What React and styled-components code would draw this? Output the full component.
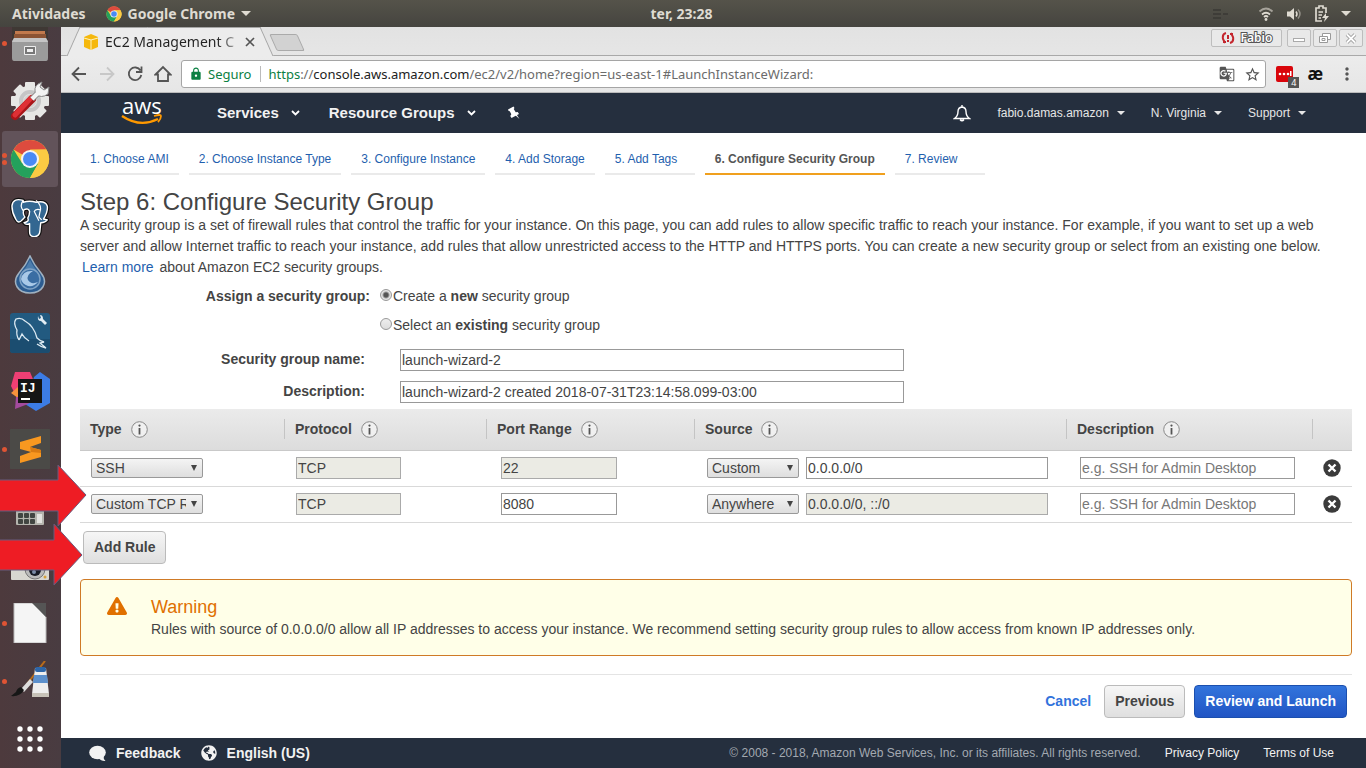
import React from "react";
import styled, { createGlobalStyle, css } from "styled-components";
import { MdLock, MdStarBorder, MdGTranslate, MdMoreVert } from "react-icons/md";
import { FaExclamationTriangle, FaGlobeAmericas } from "react-icons/fa";

const uiFont = `"Noto Sans", "Open Sans", sans-serif`;
const pageFont = `"Liberation Sans", Arial, sans-serif`;

const GlobalStyle = createGlobalStyle`
  *, *::before, *::after { box-sizing: border-box; }
  body { margin: 0; font-family: ${pageFont}; font-size: 14px; color: #444; background: #fff; }
  button, input, select { font: inherit; color: inherit; margin: 0; }
  a { text-decoration: none; color: #1f5fae; }
`;

/* ---------- desktop shell ---------- */

const Desktop = styled.div`
  position: relative;
  display: flex;
  flex-direction: column;
  min-height: 100vh;
`;

const TopBar = styled.header`
  display: grid;
  grid-template-columns: 1fr auto 1fr;
  align-items: center;
  height: 27px;
  padding: 0 15px 0 12px;
  background: linear-gradient(#55534a, #45443f);
  color: #dfdbd2;
  font: 700 14px/26px ${uiFont};
`;

const TopGroup = styled.div`
  display: flex;
  align-items: center;
  justify-content: ${(p) => (p.$end ? "flex-end" : "flex-start")};
  gap: ${(p) => p.$gap}px;
`;

const Caret = styled.span`
  width: 0;
  height: 0;
  border: ${(p) => p.$size || 4}px solid transparent;
  border-top-color: currentColor;
  border-bottom: 0;
`;

const Workspace = styled.div`
  display: flex;
  flex: 1;
`;

const Dock = styled.nav`
  flex: 0 0 61px;
  overflow: hidden;
  background: linear-gradient(90deg, #4d3a3d, #493c41);
`;

const DockList = styled.ul`
  list-style: none;
  margin: -13px 0 0;
  padding: 0;
`;

const DockItem = styled.li`
  display: flex;
  align-items: center;
  height: 58px;
  padding-left: 2px;
`;

const DockButton = styled.button`
  display: flex;
  align-items: center;
  width: 56px;
  height: 56px;
  padding: 0;
  border: 0;
  border-radius: 3px;
  background: ${(p) => (p.$active ? "#62535a" : "transparent")};
`;

const Dots = styled.span`
  display: flex;
  flex-direction: column;
  gap: 2px;
  width: 8px;
`;

const Dot = styled.i`
  width: 5px;
  height: 5px;
  border-radius: 50%;
  background: #df5434;
`;

const Window = styled.div`
  display: flex;
  flex: 1;
  flex-direction: column;
  min-width: 0;
`;

/* ---------- browser chrome ---------- */

const TabStrip = styled.div`
  display: flex;
  height: 29px;
  background: linear-gradient(#e2e2e2, #e6e6e6);
  box-shadow: inset 0 -1px #a9a9a9;
  font-family: ${uiFont};
`;

const slant = css`
  content: "";
  position: absolute;
  top: 0;
  bottom: 0;
  width: 58%;
  background: #ececec;
  border-top: 1px solid #a5a5a5;
`;

const BrowserTab = styled.div`
  position: relative;
  display: flex;
  align-items: center;
  width: 194px;
  margin-left: 12px;
  padding: 0 12px 0 10px;
  font-size: 14px;
  color: #222;
  &::before { ${slant} left: 0; border-left: 1px solid #a5a5a5; transform: skewX(-24deg); }
  &::after { ${slant} right: 0; border-right: 1px solid #a5a5a5; transform: skewX(24deg); }
  > * { position: relative; z-index: 1; }
`;

const TabTitle = styled.span`
  flex: 1;
  margin-left: 6px;
  white-space: nowrap;
  background: linear-gradient(90deg, #222 80%, #bbb 96%);
  background-clip: text;
  color: transparent;
`;

const PlainButton = styled.button`
  display: flex;
  align-items: center;
  gap: ${(p) => p.$gap || 0}px;
  padding: 0;
  border: 0;
  background: none;
`;

const NewTab = styled.button`
  width: 28px;
  height: 17px;
  margin: 7px 0 0 6px;
  border: 1px solid #aaa;
  border-radius: 2px;
  background: #d2d2d2;
  transform: skewX(24deg);
`;

const WindowButtons = styled.div`
  display: flex;
  gap: 2px;
  margin: 2px 3px 0 auto;
`;

const WindowButton = styled.button`
  display: flex;
  align-items: center;
  justify-content: center;
  gap: 6px;
  width: ${(p) => (p.$wide ? 71 : 24)}px;
  height: 18px;
  margin-right: ${(p) => (p.$wide ? 3 : 0)}px;
  padding: 0;
  border: 1px solid #bdbdbd;
  border-radius: 2px;
  background: #e9e9e9;
`;

const UserName = styled.span`
  font-size: 12px;
  font-weight: 600;
  line-height: 16px;
  color: #fff;
  -webkit-text-stroke: 2px #555;
  paint-order: stroke fill;
`;

const Toolbar = styled.div`
  display: flex;
  align-items: center;
  height: 37px;
  padding: 0 9px;
  background: linear-gradient(#ececec, #e6e6e6);
  border-bottom: 1px solid #bbb;
  font-family: ${uiFont};
`;

const NavButtons = styled.div`
  display: flex;
  gap: 10px;
  margin-right: 9px;
`;

const UrlBox = styled.div`
  display: flex;
  flex: 1;
  align-items: center;
  height: 28px;
  padding: 0 4px 0 7px;
  border: 1px solid #a5a5a5;
  border-radius: 3px;
  background: #fff;
  font-size: 13px;
  color: #0b8043;
`;

const Secure = styled.span`
  padding-right: 9px;
  margin: 0 7px 0 5px;
  border-right: 1px solid #bbb;
  line-height: 16px;
`;

const Url = styled.span`
  flex: 1;
  white-space: nowrap;
  color: #6b6b6b;
  em { font-style: normal; color: #0b8043; }
  b { font-weight: 400; color: #222; }
`;

const UrlActions = styled.div`
  display: flex;
  gap: 9px;
  color: #555;
`;

const Extensions = styled.div`
  display: flex;
  align-items: center;
  gap: 14px;
  margin-left: 10px;
  color: #555;
`;

const Blocker = styled.button`
  position: relative;
  width: 17px;
  height: 16px;
  padding: 0;
  border: 0;
  border-radius: 2px;
  background: #d9050b;
`;

const Badge = styled.span`
  position: absolute;
  right: -6px;
  bottom: -6px;
  width: 11px;
  height: 11px;
  background: #555;
  color: #fff;
  font: 9px/11px ${uiFont};
  text-align: center;
`;

const Ash = styled.button`
  padding: 0;
  border: 0;
  background: none;
  color: #111;
  font: 700 17px/20px ${uiFont};
`;

/* ---------- console header and footer ---------- */

const ConsoleBar = styled.header`
  display: flex;
  align-items: center;
  height: 40px;
  padding: 0 60px;
  background: #252f3e;
  color: #fff;
`;

const MainMenu = styled.nav`
  display: flex;
  align-items: center;
  gap: 29px;
  margin-left: 54px;
`;

const MenuButton = styled(PlainButton)`
  gap: 12px;
  padding-bottom: 1px;
  font-size: 15px;
  font-weight: 700;
  color: #f2f2f2;
`;

const AccountMenu = styled.nav`
  display: flex;
  align-items: center;
  gap: 26px;
  margin-left: auto;
  font-size: 12px;
  color: #e6e6e6;
`;

const Footer = styled.footer`
  display: flex;
  align-items: center;
  height: 30px;
  padding: 0 32px 0 28px;
  background: #252f3e;
  color: #f2f2f2;
  font-size: 12px;
`;

const FooterButton = styled(PlainButton)`
  margin-right: 20px;
  font-size: 14px;
  font-weight: 700;
`;

const Legal = styled.div`
  display: flex;
  gap: 24px;
  margin-left: auto;
  color: #a3a9b1;
  a { color: #f2f2f2; }
`;

/* ---------- wizard ---------- */

const Page = styled.main`
  flex: 1;
  padding: 11px 14px 20px 19px;
`;

const Steps = styled.nav`
  display: flex;
  gap: 10px;
`;

const Step = styled.a`
  min-width: 90px;
  height: 31px;
  padding: 0 10px;
  border-bottom: 2px solid ${(p) => (p.$current ? "#f0a01e" : "#eaeaea")};
  color: ${(p) => (p.$current ? "#555" : "#1f5fae")};
  font-size: 12px;
  font-weight: ${(p) => (p.$current ? 700 : 400)};
  line-height: 30px;
  white-space: nowrap;
`;

const Title = styled.h1`
  margin: 14px 0 0;
  font-size: 24px;
  font-weight: 400;
  line-height: 26px;
`;

const Intro = styled.p`
  margin: 0;
  line-height: 21px;
  a { margin: 0 2px; }
`;

const Form = styled.div`
  padding-top: 4px;
`;

const AssignRow = styled.div`
  display: grid;
  grid-template-columns: 290px 1fr;
  column-gap: 10px;
  line-height: 29px;
`;

const RowLabel = styled.label`
  font-weight: 700;
  text-align: right;
`;

const RadioLabel = styled.label`
  display: flex;
  align-items: center;
  white-space: pre;
`;

const Radio = styled.input`
  appearance: none;
  width: 12px;
  height: 12px;
  margin: 0 1px 4px 0;
  border: 1px solid #999;
  border-radius: 50%;
  background: linear-gradient(#eee, #ddd);
  &:checked { background: radial-gradient(circle, #555 0 2px, #e4e4e4 4px); }
`;

const Fields = styled.div`
  display: grid;
  grid-template-columns: 285px 504px;
  gap: 10px 35px;
  margin-top: 9px;
  line-height: 20px;
`;

const TextInput = styled.input`
  width: ${(p) => (p.$width ? `${p.$width}px` : "100%")};
  height: 22px;
  padding: 0 1px;
  border: 1px solid #999;
  border-radius: 0;
  background: #fff;
  color: #444;
  &:disabled { background: #ebebe4; border-color: #aaa; }
  &::placeholder { color: #777; }
`;

const RuleTable = styled.table`
  width: 100%;
  margin-top: 6px;
  border-spacing: 0;
  table-layout: fixed;
  th { height: 42px; padding: 0 0 1px; border-bottom: 1px solid #c9c9c9; text-align: left; background: linear-gradient(#ebebeb, #dcdcdc); }
  td { height: 36px; padding: 0 0 1px; border-bottom: 1px solid #d9d9d9; }
`;

const HeadCell = styled.div`
  display: flex;
  align-items: center;
  gap: 9px;
  height: 20px;
  padding-left: 10px;
  line-height: 18px;
  border-right: ${(p) => (p.$last ? 0 : "1px solid #c4c4c4")};
`;

const Cell = styled.div`
  display: flex;
  align-items: center;
  gap: 7px;
  padding: 0 ${(p) => p.$right || 0}px 0 ${(p) => p.$left}px;
`;

const SelectBox = styled.span`
  position: relative;
  flex: none;
  width: ${(p) => p.$width}px;
  height: 20px;
  &::after {
    content: "";
    position: absolute;
    right: 6px;
    top: 7px;
    border: 3px solid transparent;
    border-top: 6px solid #444;
    border-bottom: 0;
    pointer-events: none;
  }
`;

const Select = styled.select`
  appearance: none;
  width: 100%;
  height: 20px;
  padding: 0 16px 0 4px;
  border: 1px solid #999;
  border-radius: 2px;
  background: linear-gradient(#f4f4f4, #dedede);
  color: #444;
  line-height: 18px;
`;

const Button = styled.button`
  height: 33px;
  padding: 0 10px 1px;
  border: 1px solid ${(p) => (p.$primary ? "#1b4fae" : "#bbb")};
  border-radius: 4px;
  background: ${(p) => (p.$primary ? "linear-gradient(#3274dc, #2155c4)" : "linear-gradient(#f6f6f6, #dfdfdf)")};
  color: ${(p) => (p.$primary ? "#fff" : "#444")};
  font-weight: 700;
`;

const AddRow = styled.div`
  padding: 8px 3px 0;
`;

const Warning = styled.section`
  display: flex;
  gap: 24px;
  margin-top: 15px;
  padding: 16px 26px 15px;
  border: 1px solid #cf7a26;
  border-radius: 4px;
  background: #ffffe8;
`;

const WarningTitle = styled.h2`
  margin: 0;
  color: #e07000;
  font-size: 18px;
  font-weight: 400;
  line-height: 22px;
`;

const WarningText = styled.p`
  margin: 0;
  line-height: 22px;
`;

const Actions = styled.div`
  display: flex;
  align-items: center;
  justify-content: flex-end;
  gap: 9px;
  margin-top: 18px;
  padding: 10px 5px 0;
  border-top: 1px solid #e4e4e4;
`;

const Cancel = styled.a`
  margin-right: 4px;
  padding-bottom: 1px;
  color: #3173dc;
  font-weight: 700;
`;

const Annotations = styled.svg`
  position: absolute;
  left: 0;
  top: 464px;
  pointer-events: none;
`;

/* ---------- drawings ---------- */

const ChromeIcon = ({ size }) => (
  <svg width={size} height={size} viewBox="0 0 40 40">
    <circle cx="20" cy="20" r="19" fill="#fbcb43" />
    <path d="M20 20 3.5 10.5A19 19 0 0 1 36.5 10.5L20 11z" fill="#dd4b3e" />
    <path d="M3.5 10.5A19 19 0 0 0 20 39L28 25 20 20 12 24z" fill="#24a15c" />
    <path d="M20 39A19 19 0 0 0 36.5 10.5H20L28 25z" fill="#fbcb43" />
    <circle cx="20" cy="20" r="9" fill="#f4f4f4" />
    <circle cx="20" cy="20" r="7" fill="#4a8af4" />
  </svg>
);

const icon = (children) => (
  <svg width="40" height="40" viewBox="0 0 40 40">{children}</svg>
);

const gearTeeth = [0, 45, 90, 135, 180, 225, 270, 315];

const dockApps = [
  { name: "Files", dots: 1, art: icon(<>
    <rect x="2" y="1" width="36" height="20" rx="2" fill="#3f3834" />
    <path d="M5 8h30v3H5z" fill="#c27a4d" /><path d="M4 11h32v5H4z" fill="#8c5434" />
    <path d="M4 15h32l2 3v17q0 3-2 3H4q-2 0-2-3V18z" fill="#9b9b9b" />
    <path d="M4 15h32l2 4H2z" fill="#c5c5c5" />
    <rect x="14" y="23" width="12" height="9" rx="1" fill="#eee" /><rect x="15" y="24" width="10" height="7" fill="#777" /><rect x="17" y="26" width="6" height="3" fill="#eee" />
  </>) },
  { name: "Settings", dots: 0, art: icon(<>
    {gearTeeth.map((a) => <rect key={a} x="15" y="1" width="10" height="10" rx="1" fill="#e7e7e5" transform={`rotate(${a} 20 20)`} />)}
    <circle cx="20" cy="20" r="11" fill="#d4d4d2" stroke="#e7e7e5" strokeWidth="9" /><circle cx="20" cy="20" r="9" fill="none" stroke="#c6c6c6" strokeWidth="4" />
    <path d="M5 35 22 18" stroke="#a91519" strokeWidth="8" strokeLinecap="round" /><path d="M5 34 21 17" stroke="#df3035" strokeWidth="5" strokeLinecap="round" />
    <path d="M22 18 29 11" stroke="#888" strokeWidth="6" /><path d="M28 3q-5 4-2 10 5 5 12 0l1-7-5 3-4-3 2-5z" fill="#f3f3f3" stroke="#888" /><path d="M22 18 30 10" stroke="#f3f3f3" strokeWidth="4" />
  </>) },
  { name: "Google Chrome", dots: 2, active: true, art: <ChromeIcon size={40} /> },
  { name: "PostgreSQL", dots: 0, art: icon(<g transform="translate(1 1.500) scale(.93)">
    <path d="M13 2Q2-1 1 8q0 7 4 14 3 6 7 1l3-3q-3-4-1-8 5-2 6 2 0 4-2 7 2 4-4 5 2 3 6 1v9q0 5 5 5t6-5l1-10q5 0 7-3l-4-1q5-8 4-14-2-6-12-4-7-2-14 0z" fill="#336791" stroke="#111" strokeWidth="4" strokeLinejoin="round" />
    <path d="M13 2Q2-1 1 8q0 7 4 14 3 6 7 1l3-3q-3-4-1-8 5-2 6 2 0 4-2 7 2 4-4 5 2 3 6 1v9q0 5 5 5t6-5l1-10q5 0 7-3l-4-1q5-8 4-14-2-6-12-4-7-2-14 0z" fill="#336791" stroke="#fff" strokeWidth="1.500" strokeLinejoin="round" />
    <path d="M13 2q-4 6 0 11M27 2q7 6 4 13l-1 5 3 3M31 12q-5-1-6 2l3 6 2 4" fill="none" stroke="#fff" strokeWidth="1.300" />
  </g>) },
  { name: "Deluge", dots: 0, art: icon(<>
    <path d="M20 1q4 9 11 17c8 10 1 20-11 20S1 28 9 18Q16 10 20 1z" fill="#2c5c90" stroke="#9fb1c0" strokeWidth="1.500" />
    <path d="M20 5q4 8 8 12H12q5-5 8-12z" fill="#4d7dac" />
    <circle cx="20" cy="24" r="10" fill="#3a6da3" stroke="#7fa3c6" strokeWidth="1.500" /><path d="M11 24q2-9 12-8-7 4-5 9 3 5 10 2-4 5-10 4-6-2-7-7z" fill="#a9c9e8" />
  </>) },
  { name: "MySQL Workbench", dots: 0, art: icon(<>
    <rect width="40" height="40" rx="3" fill="#225a80" /><path d="M0 26h40v11q0 3-3 3H3q-3 0-3-3z" fill="#1b4d70" />
    <path d="M9 27q-3-5-2-10Q3 10 6 6q5-2 9 2 9 5 12 17 3 3 7 4l-4 1 6 5q-5-1-9-4M9 27l3-6q2 4 7 7" fill="none" stroke="#dceaf2" strokeWidth="1.300" />
    <path d="M28 3q-1 5 3 5l4 4 2-2-4-4q0-4-3-4l1 3-2 1z" fill="#e2edf4" />
  </>) },
  { name: "IntelliJ IDEA", dots: 0, art: icon(<>
    <path d="M5 1h15l5 12L8 29 1 15z" fill="#ef3f74" /><path d="M1 22 8 16v11z" fill="#f5933c" />
    <path d="M24 6 30 1 40 8V32L26 40 15 33z" fill="#3c7ce5" /><path d="M6 26 27 25 18 33 5 38z" fill="#a34b9d" />
    <rect x="8" y="8" width="24" height="24" fill="#151515" />
    <text x="10" y="21" fill="#fff" fontFamily="Liberation Mono" fontWeight="700" fontSize="13">IJ</text><path d="M11 27h9v2h-9z" fill="#fff" />
  </>) },
  { name: "Sublime Text", dots: 1, art: icon(<>
    <rect y="-1" width="40" height="42" rx="2" fill="#4b4a47" /><path d="M10 13 31 7v7l-11 4 11 3v7l-21 6v-7l11-4-11-3z" fill="#f89820" />
    <path d="M20 18l11 3v3l-10-1z" fill="#d97b12" />
  </>) },
  { name: "Calculator", dots: 0, art: icon(<>
    <rect x="6" y="2" width="28" height="36" rx="1" fill="#b5b5ae" />
    {[8, 14, 20].map((x) => [26, 32].map((y) => <rect key={`${x}${y}`} x={x} y={y} width="5" height="5" rx="1" fill="#414541" />))}
    <rect x="27" y="27" width="5" height="9" fill="#e3e3df" />
  </>) },
  { name: "Screenshot", dots: 0, art: icon(<>
    <rect x="1" y="8" width="38" height="27" rx="1" fill="#d8d7d1" /><circle cx="25" cy="24" r="10" fill="#bbb" stroke="#777" /><circle cx="25" cy="25" r="6" fill="#181b26" /><circle cx="24" cy="27" r="2" fill="#7b8ca8" /><circle cx="35" cy="32" r="1.500" fill="#d5a13c" />
  </>) },
  { name: "LibreOffice", dots: 1, art: icon(<>
    <path d="M4 0h20l12 14v26H4z" fill="#f5f5f5" stroke="#b9b9b9" /><path d="M22 0h14v14z" fill="#555" />
  </>) },
  { name: "Paint", dots: 1, art: icon(<>
    <path d="M35 0 17 23" stroke="#b96c1a" strokeWidth="2" /><path d="M20 18 11 28l3 3 9-10z" fill="#ddd" /><path d="M11 26q-4 1-5 5l-5 4q9 1 13-6z" fill="#171717" />
    <path d="M25 7h11l3 26H22z" fill="#eee" /><rect x="25" y="6" width="11" height="5" rx="2" fill="#2d66a8" /><path d="M24 14h13l1 8H23z" fill="#5c90cc" /><path d="M22 32h17v4H22z" fill="#c7c2b8" />
  </>) },
  { name: "Show applications", dots: 0, art: icon(
    [10, 20, 30].map((x) => [10, 20, 30].map((y) => <circle key={`${x}-${y}`} cx={x} cy={y} r="2.700" fill="#fff" />))
  ) },
];

const Chevron = () => (
  <svg width="9" height="6" viewBox="0 0 9 6"><path d="m1 1 3.500 3.500L8 1" fill="none" stroke="#fff" strokeWidth="1.800" /></svg>
);

const Info = () => (
  <svg width="17" height="17" viewBox="0 0 17 17" role="img" aria-label="info">
    <circle cx="8.500" cy="8.500" r="7.800" fill="#f0f0f0" stroke="#888" />
    <path d="M8.500 7v6.500" stroke="#555" strokeWidth="1.800" /><circle cx="8.500" cy="4.600" r="1.100" fill="#555" />
  </svg>
);

const RemoveIcon = () => (
  <svg width="18" height="18" viewBox="0 0 18 18"><circle cx="9" cy="9" r="8.700" fill="#3b3b3b" /><path d="m5.500 5.500 7 7m0-7-7 7" stroke="#fff" strokeWidth="2.400" /></svg>
);

const NavIcon = ({ d, color = "#555" }) => (
  <svg width="18" height="18" viewBox="0 0 18 18"><path d={d} fill="none" stroke={color} strokeWidth="1.800" /></svg>
);

const PinIcon = () => (
  <svg width="16" height="14" viewBox="0 0 16 14" fill="#fff">
    <path d="M3 3.500 8.500.5l1 1.500-.8 1 2 3.200 2-.2 1.300 2L6.500 12 5.300 10l1-1.800-1.500-3-1.200-.2z" /><path d="m10 9 1.400-.8L14.500 13z" />
  </svg>
);

const SpeechIcon = () => (
  <svg width="17" height="17" viewBox="0 0 17 17" fill="#f2f2f2">
    <ellipse cx="8.500" cy="7.500" rx="8.300" ry="6.800" /><path d="M14.500 10q-.3 4 2 6-4.500.3-7-3z" />
  </svg>
);

const AwsLogo = () => (
  <svg width="42" height="50" viewBox="0 0 42 50" role="img" aria-label="aws">
    <text x="1" y="26" fill="#fff" fontFamily="Open Sans" fontSize="22">aws</text>
    <path d="M1 28q18 12 36 3" fill="none" stroke="#f90" strokeWidth="2.400" />
    <path d="M33 28q7-2 7 0 0 3-3 6" fill="none" stroke="#f90" strokeWidth="1.800" />
  </svg>
);

const steps = ["1. Choose AMI", "2. Choose Instance Type", "3. Configure Instance", "4. Add Storage", "5. Add Tags", "6. Configure Security Group", "7. Review"];
const columns = ["Type", "Protocol", "Port Range", "Source", "Description"];
const rules = [
  { type: "SSH", port: "22", fixedPort: true, source: "Custom", cidr: "0.0.0.0/0" },
  { type: "Custom TCP Rule", port: "8080", source: "Anywhere", cidr: "0.0.0.0/0, ::/0", fixedCidr: true },
];

function RuleRow({ rule }) {
  return (
    <tr>
      <td><Cell $left={11}><SelectBox $width={112}><Select aria-label="Type" defaultValue={rule.type}><option>{rule.type}</option></Select></SelectBox></Cell></td>
      <td><Cell $left={11}><TextInput aria-label="Protocol" $width={105} disabled defaultValue="TCP" /></Cell></td>
      <td><Cell $left={14}><TextInput aria-label="Port range" $width={116} disabled={rule.fixedPort} defaultValue={rule.port} /></Cell></td>
      <td><Cell $left={12} $right={19}>
        <SelectBox $width={92}><Select aria-label="Source" defaultValue={rule.source}><option>{rule.source}</option></Select></SelectBox>
        <TextInput aria-label="Source address" disabled={rule.fixedCidr} defaultValue={rule.cidr} />
      </Cell></td>
      <td><Cell $left={13} $right={18}><TextInput aria-label="Description" placeholder="e.g. SSH for Admin Desktop" /></Cell></td>
      <td><Cell $left={10}><PlainButton aria-label="Remove rule"><RemoveIcon /></PlainButton></Cell></td>
    </tr>
  );
}

function SystemBar() {
  return (
    <TopBar>
      <TopGroup $gap={20}>
        <span>Atividades</span>
        <TopGroup $gap={6}><ChromeIcon size={16} /><span>Google Chrome</span><Caret $size={5} /></TopGroup>
      </TopGroup>
      <span>ter, 23:28</span>
      <TopGroup $end $gap={12}>
        <svg width="42" height="14" viewBox="0 0 42 14"><path d="M9 3h8M9 7h8M9 11h8M19 7h5" stroke="#3a3934" strokeWidth="1.500" /></svg>
        <svg width="16" height="14" viewBox="0 0 16 14" fill="none" stroke="#dfdbd2" strokeWidth="1.800"><path d="M1.500 4.500q6.500-6 13 0" opacity=".6" /><path d="M4 7.500q4-3.500 8 0M6 10q2-2 4 0" /><circle cx="8" cy="12.500" r="1.400" fill="#dfdbd2" stroke="none" /></svg>
        <svg width="16" height="14" viewBox="0 0 16 14"><path d="M1 4.500h3L8 1v12L4 9.500H1z" fill="#dfdbd2" /><path d="M10 4.500q2 2.500 0 5" fill="none" stroke="#dfdbd2" strokeWidth="1.500" /><path d="M12 2.500q4 4.500 0 9" fill="none" stroke="#918e86" strokeWidth="1.500" /></svg>
        <svg width="15" height="18" viewBox="0 0 15 18"><path d="M12 8V3H9V1H5v2H2v13h6M4.500 7H9M4.500 10H8M4.500 13H7" fill="none" stroke="#dfdbd2" strokeWidth="1.700" /><path d="m12 8-4 5h3l-1 4 5-6h-3z" fill="#dfdbd2" /></svg>
        <Caret $size={5} />
      </TopGroup>
    </TopBar>
  );
}

function BrowserChrome() {
  return (
    <>
      <TabStrip>
        <BrowserTab>
          <svg width="16" height="16" viewBox="0 0 16 16"><path d="m1 3 7-3 7 3v10l-7 3-7-3z" fill="#f5b80d" /><path d="m1 4 7 2 7-2M8 6v10" fill="none" stroke="#fff2bd" /></svg>
          <TabTitle>EC2 Management C</TabTitle>
          <PlainButton aria-label="Close tab"><svg width="10" height="10" viewBox="0 0 10 10"><path d="m1 1 8 8m0-8-8 8" stroke="#555" strokeWidth="1.700" /></svg></PlainButton>
        </BrowserTab>
        <NewTab aria-label="New tab" />
        <WindowButtons>
          <WindowButton $wide>
            <svg width="14" height="12" viewBox="0 0 14 12" fill="none" stroke="#c4262e" strokeWidth="2"><path d="M5 1Q1 2 2 7l2 4M2 10h3M9 11q4-1 3-6l-2-4M12 2H9M7 3v4M7 8v2" /></svg>
            <UserName>Fabio</UserName>
          </WindowButton>
          <WindowButton aria-label="Minimize"><svg width="12" height="10"><rect x=".5" y="5.500" width="11" height="3" fill="#fff" stroke="#aaa" /></svg></WindowButton>
          <WindowButton aria-label="Restore"><svg width="12" height="10" fill="#fff" stroke="#999"><path d="M3.500.5h8v6h-8z" /><path d="M.5 3.500h8v6h-8zM3 5.500h3v2H3z" /></svg></WindowButton>
          <WindowButton aria-label="Close"><svg width="12" height="11" viewBox="0 0 12 11"><path d="m2 1.500 8 8m0-8-8 8" stroke="#999" strokeWidth="3.600" /><path d="m2 1.500 8 8m0-8-8 8" stroke="#fff" strokeWidth="1.800" /></svg></WindowButton>
        </WindowButtons>
      </TabStrip>
      <Toolbar>
        <NavButtons>
          <PlainButton aria-label="Back"><NavIcon d="M16 9H3M9 2.500 2.500 9 9 15.500" /></PlainButton>
          <PlainButton aria-label="Forward"><NavIcon color="#c8c8c8" d="M2 9h13M9 2.500 15.500 9 9 15.500" /></PlainButton>
          <PlainButton aria-label="Reload"><NavIcon d="M14.500 5.500A6.300 6.300 0 1 0 15.300 10M15.500 1.500V7H10" /></PlainButton>
          <PlainButton aria-label="Home"><NavIcon d="M1.500 9.500 9 2l7.500 7.500H14V16H4V9.500z" /></PlainButton>
        </NavButtons>
        <UrlBox>
          <MdLock size={14} />
          <Secure>Seguro</Secure>
          <Url><em>https</em>://<b>console.aws.amazon.com</b>/ec2/v2/home?region=us-east-1#LaunchInstanceWizard:</Url>
          <UrlActions><MdGTranslate size={16} /><MdStarBorder size={17} /></UrlActions>
        </UrlBox>
        <Extensions>
          <Blocker aria-label="Extension, 4 blocked">
            <svg width="17" height="16" viewBox="0 0 17 16" fill="#fff"><circle cx="4" cy="8" r="1.300" /><circle cx="8" cy="8" r="1.300" /><circle cx="12" cy="8" r="1.300" /><path d="M14 5h1.500v5H14z" /></svg>
            <Badge>4</Badge>
          </Blocker>
          <Ash>æ</Ash>
          <MdMoreVert size={20} />
        </Extensions>
      </Toolbar>
    </>
  );
}

export default function App() {
  return (
    <Desktop>
      <GlobalStyle />
      <SystemBar />
      <Workspace>
        <Dock aria-label="Applications">
          <DockList>
            {dockApps.map((app) => (
              <DockItem key={app.name}>
                <DockButton aria-label={app.name} $active={app.active}>
                  <Dots>{Array.from({ length: app.dots }, (_, i) => <Dot key={i} />)}</Dots>
                  {app.art}
                </DockButton>
              </DockItem>
            ))}
          </DockList>
        </Dock>
        <Window>
          <BrowserChrome />
          <ConsoleBar>
            <AwsLogo />
            <MainMenu>
              <MenuButton>Services <Chevron /></MenuButton>
              <MenuButton>Resource Groups <Chevron /></MenuButton>
              <MenuButton aria-label="Pin"><PinIcon /></MenuButton>
            </MainMenu>
            <AccountMenu>
              <PlainButton aria-label="Notifications">
                <svg width="18" height="18" viewBox="0 0 18 18" fill="none" stroke="#fff" strokeWidth="1.400"><path d="M1.500 14.500h15Q13 12 13 7.500 13 3.500 9 3 5 3.500 5 7.500 5 12 1.500 14.500zM9 3V1" /><path d="M7 15.500q2 2.500 4 0" fill="#fff" /></svg>
              </PlainButton>
              <PlainButton $gap={8}>fabio.damas.amazon <Caret /></PlainButton>
              <PlainButton $gap={8}>N. Virginia <Caret /></PlainButton>
              <PlainButton $gap={8}>Support <Caret /></PlainButton>
            </AccountMenu>
          </ConsoleBar>
          <Page>
            <Steps aria-label="Wizard steps">
              {steps.map((s, i) => <Step key={s} href="#step" $current={i === 5}>{s}</Step>)}
            </Steps>
            <Title>Step 6: Configure Security Group</Title>
            <Intro>
              A security group is a set of firewall rules that control the traffic for your instance. On this page, you can add rules to allow specific traffic to reach your instance. For example, if you want to set up a web server and allow Internet traffic to reach your instance, add rules that allow unrestricted access to the HTTP and HTTPS ports. You can create a new security group or select from an existing one below. <a href="#learn">Learn more</a> about Amazon EC2 security groups.
            </Intro>
            <Form>
              <AssignRow role="radiogroup" aria-labelledby="assign">
                <RowLabel as="span" id="assign">Assign a security group:</RowLabel>
                <RadioLabel><Radio type="radio" name="group" defaultChecked />Create a <b>new</b> security group</RadioLabel>
                <span />
                <RadioLabel><Radio type="radio" name="group" />Select an <b>existing</b> security group</RadioLabel>
              </AssignRow>
              <Fields>
                <RowLabel htmlFor="name">Security group name:</RowLabel><TextInput id="name" defaultValue="launch-wizard-2" />
                <RowLabel htmlFor="desc">Description:</RowLabel><TextInput id="desc" defaultValue="launch-wizard-2 created 2018-07-31T23:14:58.099-03:00" />
              </Fields>
            </Form>
            <RuleTable>
              <colgroup><col width="205" /><col width="202" /><col width="208" /><col /><col width="246" /><col width="39" /></colgroup>
              <thead><tr>
                {columns.map((c) => <th key={c} scope="col"><HeadCell>{c}<Info /></HeadCell></th>)}
                <th><HeadCell $last /></th>
              </tr></thead>
              <tbody>{rules.map((r) => <RuleRow key={r.type} rule={r} />)}</tbody>
            </RuleTable>
            <AddRow><Button>Add Rule</Button></AddRow>
            <Warning>
              <FaExclamationTriangle size={20} color="#e07000" />
              <div>
                <WarningTitle>Warning</WarningTitle>
                <WarningText>Rules with source of 0.0.0.0/0 allow all IP addresses to access your instance. We recommend setting security group rules to allow access from known IP addresses only.</WarningText>
              </div>
            </Warning>
            <Actions>
              <Cancel href="#cancel">Cancel</Cancel>
              <Button>Previous</Button>
              <Button $primary>Review and Launch</Button>
            </Actions>
          </Page>
          <Footer>
            <FooterButton $gap={10}><SpeechIcon />Feedback</FooterButton>
            <FooterButton $gap={10}><FaGlobeAmericas size={16} />English (US)</FooterButton>
            <Legal>
              <span>© 2008 - 2018, Amazon Web Services, Inc. or its affiliates. All rights reserved.</span>
              <a href="#privacy">Privacy Policy</a>
              <a href="#terms">Terms of Use</a>
            </Legal>
          </Footer>
        </Window>
      </Workspace>
      <Annotations width="90" height="124" viewBox="0 0 90 124" aria-hidden="true">
        <g fill="#ee1c24" stroke="#6a5a7c">
          <path d="M-2 16H58V1L86 31 58 62V47H-2z" />
          <path d="M-2 76H54V60L82 91 54 121V106H-2z" />
        </g>
      </Annotations>
    </Desktop>
  );
}
